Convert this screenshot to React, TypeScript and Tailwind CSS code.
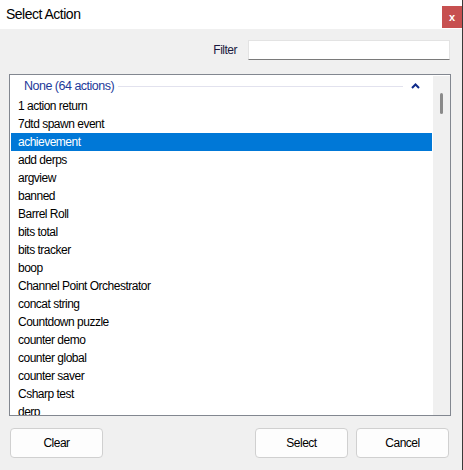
const actions = [
  "1 action return",
  "7dtd spawn event",
  "achievement",
  "add derps",
  "argview",
  "banned",
  "Barrel Roll",
  "bits total",
  "bits tracker",
  "boop",
  "Channel Point Orchestrator",
  "concat string",
  "Countdown puzzle",
  "counter demo",
  "counter global",
  "counter saver",
  "Csharp test",
  "derp",
];

const App: React.FC = () => {
  return (
    <div className="w-[463px] h-[470px] bg-[#f0f0f0] flex flex-col text-[12px] tracking-[-0.5px] text-black border-r border-[#3a3a3a] font-['Liberation_Sans',sans-serif] overflow-hidden">
      {/* Title bar */}
      <div className="h-[29px] bg-white flex items-center justify-between pl-[6px] shrink-0">
        <span className="text-[14px] tracking-[-0.5px]">Select Action</span>
        <div className="w-[20px] h-[22px] bg-[#c75050] text-white text-[11px] font-bold tracking-normal flex items-center justify-center self-end mb-[1px]">
          x
        </div>
      </div>

      {/* Filter row */}
      <div className="flex items-center justify-end gap-[11px] pt-[11px] pr-[12px]">
        <span className="text-[#1a1a40]">Filter</span>
        <input className="w-[202px] h-[20px] bg-white border border-[#e3e3e3] border-b-[#7a7a7a] outline-none" />
      </div>

      {/* List */}
      <div className="ml-[9px] mr-[11px] mt-[14px] h-[342px] bg-white border border-[#828790] flex overflow-hidden">
        <div className="flex-1 flex flex-col pl-[1px] pr-[1px]">
          <div className="h-[22px] flex items-center pl-[13px] pr-[8px] shrink-0">
            <span className="text-[#1e3a9a] text-[12.5px]">None (64 actions)</span>
            <div className="flex-1 h-px bg-[#e2e2ee] mx-[4px]" />
            <svg width="9" height="6" viewBox="0 0 9 6" className="mx-[4px]">
              <path d="M1 5 L4.5 1.5 L8 5" stroke="#0d2a8a" strokeWidth="2" fill="none" />
            </svg>
          </div>
          {actions.map((a) => (
            <div
              key={a}
              className={
                a === "achievement"
                  ? "h-[18px] shrink-0 flex items-center pl-[7px] bg-[#0078d7] text-white"
                  : "h-[18px] shrink-0 flex items-center pl-[7px]"
              }
            >
              {a}
            </div>
          ))}
        </div>
        <div className="w-[17px] bg-[#f0f0f0] flex justify-center mt-[1px] pt-[17px]">
          <div className="w-[3px] h-[21px] bg-[#8a8a8a] rounded-full" />
        </div>
      </div>

      {/* Buttons */}
      <div className="flex items-center px-[10px] mt-[12px]">
        <button className="w-[93px] h-[30px] bg-[#fdfdfd] border border-[#d0d0d0] rounded-[4px]">Clear</button>
        <div className="flex-1" />
        <button className="w-[93px] h-[30px] bg-[#fdfdfd] border border-[#d0d0d0] rounded-[4px]">Select</button>
        <button className="w-[93px] h-[30px] bg-[#fdfdfd] border border-[#d0d0d0] rounded-[4px] ml-[8px] mr-[3px]">Cancel</button>
      </div>
    </div>
  );
};

export default App;
